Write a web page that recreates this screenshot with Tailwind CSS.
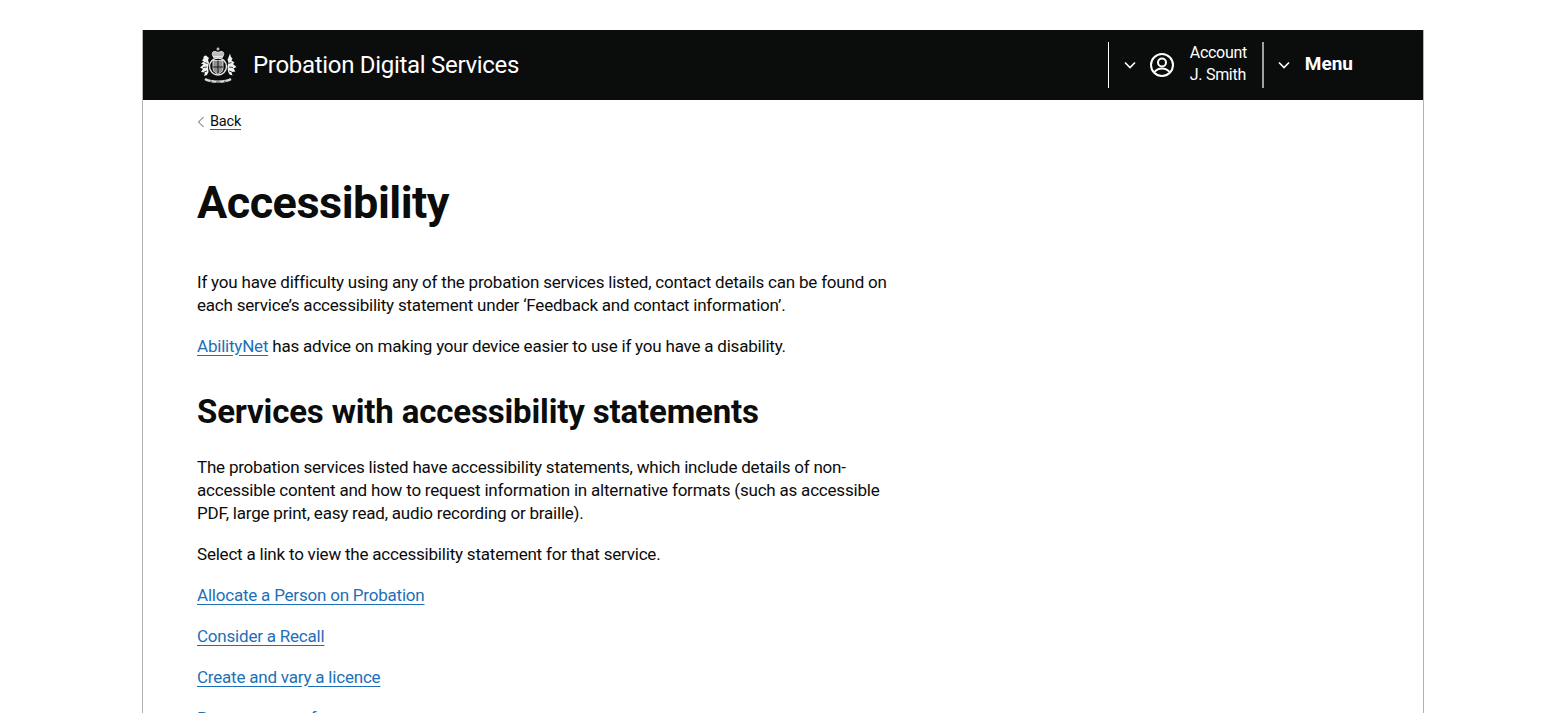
<!DOCTYPE html>
<html lang="en">
<head>
<meta charset="UTF-8">
<title>Accessibility</title>
<script src="https://cdn.jsdelivr.net/npm/@tailwindcss/browser@4"></script>
</head>
<body class="bg-white h-[713px] overflow-hidden font-['Roboto','Noto_Sans',sans-serif] text-[#0b0c0c]">
<div class="mx-[142px] mt-[30px] border-x border-[#b1b4b6] h-[683px] overflow-hidden">
  <header class="bg-[#0b0c0c] h-[70px] flex items-center pl-[55px] pr-[70px] text-white">
    <!-- royal crest, simplified -->
    <svg class="w-[40px] h-[36px]" viewBox="1.500 -0.500 37 36" fill="none" stroke="#e8e8e8" stroke-width="1">
      <path d="M20 0v3M18.500 1.500h3" stroke-width="1.200"/>
      <path d="M15 9c-1.500-3-.5-5 1.500-5 1 0 2 .5 3.500 1 1.500-.5 2.500-1 3.500-1 2 0 3 2 1.500 5z" fill="#bdbdbd"/>
      <path d="M15 9.500h10" stroke-width="1.500"/>
      <circle cx="20" cy="19" r="8.500" stroke-width="1.400"/>
      <path d="M15 13h10v8c0 3-2.500 4.500-5 5.500-2.500-1-5-2.500-5-5.500z" fill="#8f8f8f" stroke="#f2f2f2" stroke-width=".8"/>
      <path d="M20 13v13M15 19.500h10" stroke="#0b0c0c" stroke-width=".9"/>
      <path d="M8 8c-2 0-3 1.500-2.500 3L4 13l2 1-3 2 2.500 1L2 20l3 1.500-2 3 4 .5-1 3.500 3-1 1.500-3-.5-5 1-4-1-3 1-2z" fill="#f2f2f2" stroke="none"/>
      <path d="M32 6l-1.500 4-1 2 1 3-1 4 .5 5 1.500 3 3 1-1-3.500 4-.5-2-3 3-1.500-3.500-3 1.500-1.500-3-2 1-2-1.500-1.500z" fill="#f2f2f2" stroke="none"/>
      <path d="M6.500 15l3 1M5 20l4-.5M33.500 15l-3 1M35 20l-4-.5M6 24.500l3-1M34 24.500l-3-1" stroke="#0b0c0c" stroke-width=".8"/>
      <path d="M7 31.500c5 3.500 21 3.500 26 0" stroke-width="2.200" stroke="#d8d8d8"/>
      <path d="M12 33.500l2 .5M18 34.500h4M26 34l2-.5" stroke="#0b0c0c" stroke-width=".6"/>
    </svg>
    <span class="ml-[15px] text-[24px] tracking-[-0.3px]">Probation Digital Services</span>
    <div class="ml-auto flex items-center h-[46px]">
      <div class="w-px h-full bg-white"></div>
      <svg class="w-[12px] h-[8px] ml-[15px]" viewBox="0 0 12 8" fill="none" stroke="white" stroke-width="1.600"><path d="M1 1.500l5 5 5-5"/></svg>
      <svg class="w-[24px] h-[24px] ml-[14px]" viewBox="0 0 24 24" fill="none" stroke="white" stroke-width="2"><circle cx="12" cy="12" r="11"/><circle cx="12" cy="9.500" r="4"/><path d="M4.500 19c2-2.500 4.500-3.500 7.500-3.500s5.500 1 7.500 3.500"/></svg>
      <div class="ml-[16px] text-[16px] tracking-[-0.3px] leading-[22px] w-[60px] -mt-[2px]"><div>Account</div><div>J. Smith</div></div>
      <div class="w-[2px] h-full bg-[#a0a0a0] ml-[12px]"></div>
      <svg class="w-[12px] h-[8px] ml-[14px]" viewBox="0 0 12 8" fill="none" stroke="white" stroke-width="1.600"><path d="M1 1.500l5 5 5-5"/></svg>
      <span class="ml-[15px] text-[19px] font-bold -mt-[2px]">Menu</span>
    </div>
  </header>
  <main class="pl-[54px]">
    <a class="flex items-center mt-[12px] h-[20px] text-[14.500px] leading-[20px]">
      <svg class="w-[8px] h-[12px] mr-[5px]" viewBox="0 0 8 12" fill="none" stroke="#505a5f" stroke-width="1"><path d="M6.500 1L1.500 6l5 5"/></svg>
      <span class="underline underline-offset-[3px] decoration-[#505a5f] tracking-[-0.2px]">Back</span>
    </a>
    <h1 class="text-[45px] tracking-[-0.5px] leading-[50px] font-bold mt-[46px] mb-[43px]">Accessibility</h1>
    <div class="w-[700px] text-[17px] tracking-[-0.21px] leading-[22.700px]">
      <p class="mb-[18.300px]">If you have difficulty using any of the probation services listed, contact details can be found on each service’s accessibility statement under ‘Feedback and contact information’.</p>
      <p class="mb-[35px]"><a class="text-[#1d70b8] underline underline-offset-[3px]">AbilityNet</a> has advice on making your device easier to use if you have a disability.</p>
      <h2 class="text-[33px] tracking-[-0.16px] leading-[40px] font-bold mb-[24px]">Services with accessibility statements</h2>
      <p class="mb-[18.300px]">The probation services listed have accessibility statements, which include details of non-accessible content and how to request information in alternative formats (such as accessible PDF, large print, easy read, audio recording or braille).</p>
      <p class="mb-[18.300px]">Select a link to view the accessibility statement for that service.</p>
      <p class="mb-[18.300px]"><a class="text-[#1d70b8] underline underline-offset-[3px]">Allocate a Person on Probation</a></p>
      <p class="mb-[18.300px]"><a class="text-[#1d70b8] underline underline-offset-[3px]">Consider a Recall</a></p>
      <p class="mb-[18.300px]"><a class="text-[#1d70b8] underline underline-offset-[3px]">Create and vary a licence</a></p>
      <p class="mb-[18.300px]"><a class="text-[#1d70b8] underline underline-offset-[3px]">Prepare a case for sentence</a></p>
    </div>
  </main>
</div>
</body>
</html>
